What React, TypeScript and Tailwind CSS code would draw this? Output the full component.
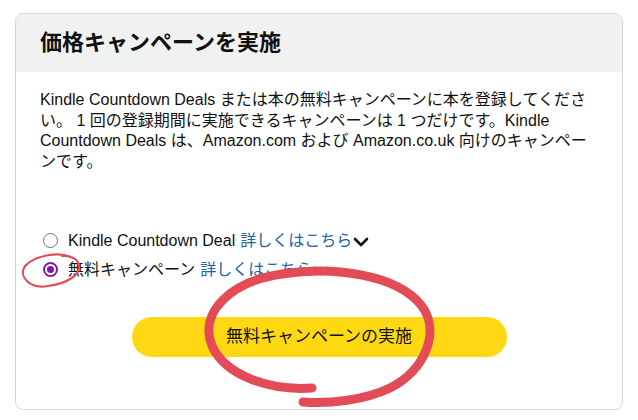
import React from 'react'

const font = { fontFamily: '"Liberation Sans", "Noto Sans CJK JP", sans-serif' }

function Chevron() {
  return (
    <svg width="16" height="10" viewBox="0 0 16 10" className="ml-[1px] mt-[3px]">
      <path d="M2 2 L8 8 L14 2" fill="none" stroke="#0f1111" strokeWidth="2.6" strokeLinecap="round" strokeLinejoin="round" />
    </svg>
  )
}

function Radio({ checked }: { checked?: boolean }) {
  if (checked) {
    return (
      <span className="flex h-[15px] w-[15px] items-center justify-center rounded-full border-2 border-[#82199f] bg-white">
        <span className="h-[7px] w-[7px] rounded-full bg-[#82199f]" />
      </span>
    )
  }
  return <span className="h-[15px] w-[15px] rounded-full border border-[#6f7373] bg-white" />
}

export default function App() {
  const opciones = [
    { label: 'Kindle Countdown Deal', checked: false },
    { label: '無料キャンペーン', checked: true },
  ]

  return (
    <div className="relative h-[420px] w-[638px] overflow-hidden bg-white text-[#0f1111]" style={font}>
      <div className="ml-[15px] mt-[13px] flex h-[397px] w-[608px] flex-col overflow-hidden rounded-[8px] border border-[#d5d9d9]">
        <div className="flex h-[58px] items-center bg-[#f0f2f2] px-[24px]">
          <h1 className="text-[22px] font-bold leading-none">価格キャンペーンを実施</h1>
        </div>
        <div className="flex flex-col px-[24px] pt-[18px]">
          <p className="text-[16px] leading-[20.5px]">
            Kindle Countdown Deals または本の無料キャンペーンに本を登録してください。 1 回の登録期間に実施できるキャンペーンは 1 つだけです。Kindle Countdown Deals は、Amazon.com および Amazon.co.uk 向けのキャンペーンです。
          </p>
          <div className="mt-[54px] flex flex-col">
            {opciones.map((op) => (
              <div key={op.label} className="flex h-[29px] items-center pl-[3px] text-[16px]">
                <Radio checked={op.checked} />
                <span className="ml-[10px]">{op.label}</span>
                <span className="ml-[5px] text-[#2162a1]">詳しくはこちら</span>
                <Chevron />
              </div>
            ))}
          </div>
          <div className="mt-[33px] flex justify-center">
            <button className="h-[40px] w-[375px] rounded-full bg-[#ffd814] text-[17px]">無料キャンペーンの実施</button>
          </div>
        </div>
      </div>
      <svg className="pointer-events-none absolute left-0 top-0" width="638" height="420" viewBox="0 0 638 420">
        <path
          d="M 312 388 C 270 391, 226 376, 212 346 C 198 312, 232 281, 282 274 C 332 266, 396 274, 421 305 C 441 330, 426 370, 390 388 C 365 400, 330 404, 303 402"
          fill="none"
          stroke="#e34c57"
          strokeWidth="9"
          strokeLinecap="round"
        />
        <path
          d="M 73 258 C 60 251, 35 255, 25 266 C 18 277, 30 289, 48 286 C 66 284, 81 275, 79 265 C 78 259, 70 255, 62 256"
          fill="none"
          stroke="#e34c57"
          strokeWidth="2.2"
          strokeLinecap="round"
        />
      </svg>
    </div>
  )
}
